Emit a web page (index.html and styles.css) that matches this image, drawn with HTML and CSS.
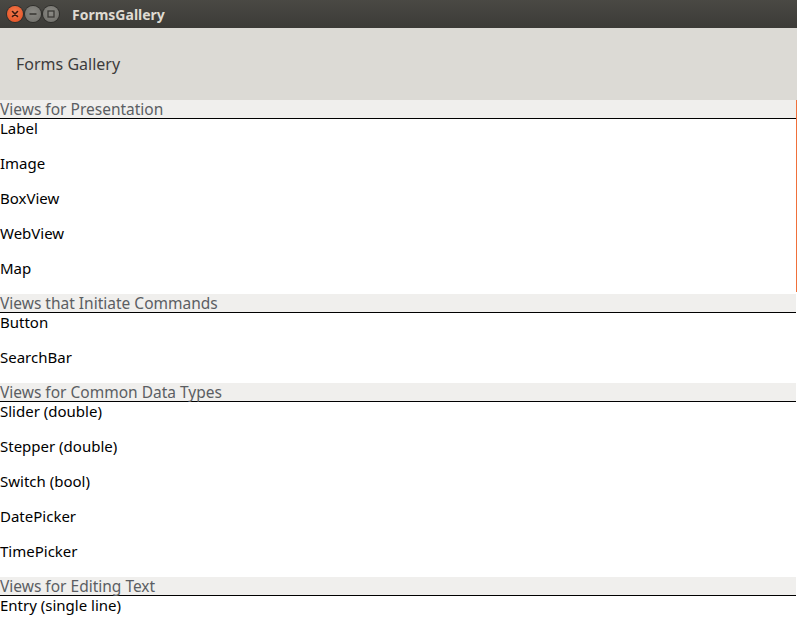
FILE: index.html
```html
<!DOCTYPE html>
<html>
<head>
<meta charset="utf-8">
<link rel="stylesheet" href="styles.css">
</head>
<body>
<div class="window">
  <div class="titlebar">
    <div class="controls">
      <span class="btn close"><svg width="16" height="16" viewBox="0 0 16 16"><path d="M5.5 5.5 L10.5 10.5 M10.5 5.5 L5.5 10.5" stroke="#3a1a10" stroke-width="1.6" stroke-linecap="round"/></svg></span>
      <span class="btn"><svg width="16" height="16" viewBox="0 0 16 16"><path d="M4.5 8 H11.5" stroke="#3b3a36" stroke-width="1.6"/></svg></span>
      <span class="btn"><svg width="16" height="16" viewBox="0 0 16 16"><rect x="5" y="5" width="6" height="6" fill="none" stroke="#3b3a36" stroke-width="1.3"/></svg></span>
    </div>
    <div class="title">FormsGallery</div>
  </div>
  <div class="header">Forms Gallery</div>
  <div class="list">
    <div class="section">
      <div class="sec-head">Views for Presentation</div>
      <div class="item">Label</div>
      <div class="item">Image</div>
      <div class="item">BoxView</div>
      <div class="item">WebView</div>
      <div class="item">Map</div>
    </div>
    <div class="section">
      <div class="sec-head">Views that Initiate Commands</div>
      <div class="item">Button</div>
      <div class="item">SearchBar</div>
    </div>
    <div class="section">
      <div class="sec-head">Views for Common Data Types</div>
      <div class="item">Slider (double)</div>
      <div class="item">Stepper (double)</div>
      <div class="item">Switch (bool)</div>
      <div class="item">DatePicker</div>
      <div class="item">TimePicker</div>
    </div>
    <div class="section">
      <div class="sec-head">Views for Editing Text</div>
      <div class="item">Entry (single line)</div>
    </div>
    <div class="scroll-indicator"></div>
  </div>
</div>
</body>
</html>
```
FILE: styles.css
```css
html, body {
  margin: 0;
  padding: 0;
  background: #ffffff;
  overflow: hidden;
}
.window {
  width: 797px;
  height: 626px;
  overflow: hidden;
  font-family: "Noto Sans", "DejaVu Sans", sans-serif;
}
.titlebar {
  height: 28px;
  background: linear-gradient(#4a4944, #3c3b37);
  display: flex;
  align-items: center;
  box-sizing: border-box;
}
.controls {
  display: flex;
  gap: 2px;
  padding-left: 7px;
}
.btn {
  width: 16px;
  height: 16px;
  border-radius: 50%;
  background: radial-gradient(circle at 50% 40%, #8a8984, #6e6d68);
  box-shadow: 0 0 0 1px #2f2e2b;
  display: flex;
}
.btn.close {
  background: radial-gradient(circle at 50% 40%, #f47c4e, #e24b1e);
}
.title {
  margin-left: 13px;
  color: #dfdbd2;
  font-weight: bold;
  font-size: 14px;
  font-family: "Noto Sans", "DejaVu Sans", sans-serif;
}
.header {
  height: 72px;
  background: #dcdad5;
  color: #3c3c3c;
  font-size: 16px;
  display: flex;
  align-items: center;
  padding-left: 16px;
}
.list {
  position: relative;
}
.sec-head {
  height: 18px;
  line-height: 18px;
  background: #f0efed;
  color: #5b5e63;
  font-size: 15.5px;
  border-bottom: 1px solid #000;
  width: 796px;
  white-space: nowrap;
}
.item {
  height: 35px;
  line-height: 18px;
  color: #000;
  font-size: 15px;
  white-space: nowrap;
}
.scroll-indicator {
  position: absolute;
  top: 0;
  right: 0;
  width: 1px;
  height: 192px;
  background: #f0703a;
}
```
